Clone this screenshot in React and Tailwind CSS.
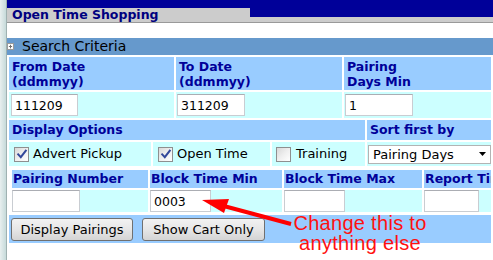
import React from 'react';

// Verdana-like face for the old form, Arial-like for the red note
const checkPath = 'M2.2 6.4 L4.8 9.2 L9.8 2.6';

const Checkbox = ({ checked }) => (
  <span className="inline-flex h-[15px] w-[15px] shrink-0 items-center justify-center border border-[#8e8f8f] bg-linear-to-br from-[#d8d8d8] via-[#efefef] to-[#ffffff]">
    {checked && (
      <svg width="12" height="12" viewBox="0 0 12 12">
        <path d={checkPath} fill="none" stroke="#33489a" strokeWidth="2" strokeLinecap="square" />
      </svg>
    )}
  </span>
);

const TextBox = ({ value = '', className = '' }) => (
  <input
    readOnly
    value={value}
    className={`h-[22px] border border-[#c9cdd2] border-t-[#abadb3] bg-white pl-[3px] text-[12.5px] text-black outline-none ${className}`}
  />
);

const Head = ({ children, className = '' }) => (
  <div className={`bg-[#99ccff] text-[12.5px] font-bold text-[#000099] ${className}`}>{children}</div>
);

const Cell = ({ children, className = '' }) => (
  <div className={`flex items-center bg-[#ccffff] ${className}`}>{children}</div>
);

const Button = ({ children, className = '' }) => (
  <button className={`h-[23px] rounded-[3px] border border-[#707070] bg-linear-to-b from-[#f2f2f2] via-[#e6e6e6] to-[#d4d4d4] text-[13px] text-black ${className}`}>
    {children}
  </button>
);

export default function App() {
  return (
    <div className="relative flex h-[260px] w-[493px] overflow-hidden bg-white font-['DejaVu_Sans',Verdana,sans-serif]">
      <div className="w-[7px] shrink-0 border-r border-[#9fb1b1] bg-linear-to-r from-[#e8efef] to-[#c6dada]" />

      <div className="flex min-w-0 flex-1 flex-col">
        {/* title tab */}
        <div className="flex border-b border-[#999999] bg-[#000099]">
          <div className="mt-[8px] h-[14px] w-[243px] whitespace-nowrap bg-[#cccccc] pl-[5px] text-[12.5px] font-bold leading-[14px] text-[#000080]">
            Open Time Shopping
          </div>
          <div className="flex flex-1 flex-col">
            <div className="h-[17px]" />
            <div className="h-[5px] bg-[#cccccc]" />
          </div>
        </div>

        {/* search criteria bar */}
        <div className="mt-[15px] flex h-[17px] items-center bg-[#6699cc]">
          <svg width="7" height="7" viewBox="0 0 7 7" className="shrink-0">
            <rect x="0.5" y="0.5" width="6" height="6" fill="#ffffff" stroke="#9a9a9a" />
            <path d="M3.5 1.8 V5.4 M1.9 3.5 H5.1" stroke="#707070" strokeWidth="1" />
          </svg>
          <span className="ml-[8px] text-[14px] leading-[17px] text-black">Search Criteria</span>
        </div>

        <div className="flex flex-col gap-[2px] px-[2px] pt-[2px]">
          {/* dates */}
          <div className="flex h-[33px] gap-[2px]">
            <Head className="w-[165px] pl-[3px] pt-[2px] leading-[15px]">From Date<br />(ddmmyy)</Head>
            <Head className="w-[166px] pl-[3px] pt-[2px] leading-[15px]">To Date<br />(ddmmyy)</Head>
            <Head className="w-[147px] pl-[3px] pt-[2px] leading-[15px]">Pairing<br />Days Min</Head>
          </div>
          <div className="flex h-[26px] gap-[2px]">
            <Cell className="w-[165px] pl-[2px]"><TextBox value="111209" className="w-[67px]" /></Cell>
            <Cell className="w-[166px] pl-[1px]"><TextBox value="311209" className="w-[68px]" /></Cell>
            <Cell className="w-[147px] pl-[1px]"><TextBox value="1" className="w-[68px]" /></Cell>
          </div>

          {/* display options */}
          <div className="flex h-[20px] gap-[2px]">
            <Head className="w-[356px] pl-[3px] leading-[20px]">Display Options</Head>
            <Head className="w-[124px] pl-[3px] leading-[20px]">Sort first by</Head>
          </div>
          <div className="flex h-[24px] gap-[2px] text-[13px] text-black">
            <Cell className="w-[142px] gap-[4px] pl-[5px]"><Checkbox checked />Advert Pickup</Cell>
            <Cell className="w-[117px] gap-[4px] pl-[5px]"><Checkbox checked />Open Time</Cell>
            <Cell className="w-[93px] gap-[5px] pl-[4px]"><Checkbox />Training</Cell>
            <Cell className="w-[124px] pl-[1px]">
              <div className="flex h-[19px] w-[123px] items-center justify-between border border-[#b3b3b3] bg-white pl-[4px] pr-[4px]">
                <span className="leading-[17px]">Pairing Days</span>
                <svg width="7" height="4" viewBox="0 0 7 4"><path d="M0 0 H7 L3.5 4 Z" fill="#000000" /></svg>
              </div>
            </Cell>
          </div>

          {/* block times */}
          <div className="flex flex-col gap-[2px] overflow-hidden pb-[1px] pl-[3px] pt-[2px]">
            <div className="flex h-[18px] gap-[2px] whitespace-nowrap">
              <Head className="w-[136px] shrink-0 pl-[1px] leading-[18px]">Pairing Number</Head>
              <Head className="w-[132px] shrink-0 pl-[1px] leading-[18px]">Block Time Min</Head>
              <Head className="w-[138px] shrink-0 pl-[1px] leading-[18px]">Block Time Max</Head>
              <Head className="w-[110px] shrink-0 pl-[1px] leading-[18px]">Report Time</Head>
            </div>
            <div className="flex h-[22px] gap-[2px]">
              <Cell className="w-[136px] shrink-0"><TextBox value="" className="h-[21px] w-[68px]" /></Cell>
              <Cell className="w-[132px] shrink-0"><TextBox value="0003" className="h-[21px] w-[61px]" /></Cell>
              <Cell className="w-[138px] shrink-0"><TextBox value="" className="h-[21px] w-[61px]" /></Cell>
              <Cell className="w-[110px] shrink-0"><TextBox value="" className="h-[21px] w-[55px]" /></Cell>
            </div>
          </div>

          {/* actions */}
          <div className="flex h-[28px] gap-[9px] bg-[#99ccff] pl-[2px] pt-[3px]">
            <Button className="w-[122px]">Display Pairings</Button>
            <Button className="w-[123px]">Show Cart Only</Button>
          </div>
        </div>
      </div>

      {/* red note */}
      <svg className="pointer-events-none absolute left-0 top-0" width="493" height="260" viewBox="0 0 493 260">
        <line x1="291" y1="224" x2="220" y2="205" stroke="#ff0000" strokeWidth="4" />
        <polygon points="202,200 229,199 224,213" fill="#ff0000" />
      </svg>
      <div className="pointer-events-none absolute left-[280px] top-[213px] w-[160px] text-center font-['Liberation_Sans',Arial,sans-serif] text-[20px] leading-[20px] tracking-[0.3px] text-[#ff1111]">
        Change this to<br />anything else
      </div>
    </div>
  );
}
